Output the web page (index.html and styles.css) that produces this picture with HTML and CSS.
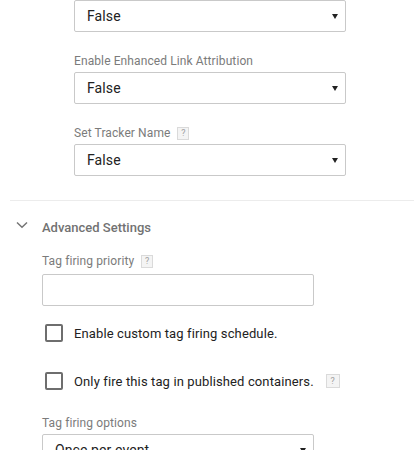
FILE: index.html
```html
<!DOCTYPE html>
<html>
<head>
<meta charset="utf-8">
<link rel="stylesheet" href="styles.css">
</head>
<body>
<div class="page">
  <section class="basic">
    <div class="field first">
      <div class="select"><span>False</span><i class="arrow"></i></div>
    </div>
    <div class="field">
      <div class="label">Enable Enhanced Link Attribution</div>
      <div class="select"><span>False</span><i class="arrow"></i></div>
    </div>
    <div class="field">
      <div class="label">Set Tracker Name <span class="help">?</span></div>
      <div class="select"><span>False</span><i class="arrow"></i></div>
    </div>
  </section>
  <div class="divider"></div>
  <section class="advanced">
    <div class="adv-header">
      <svg class="chev" width="12" height="8" viewBox="0 0 12 8"><path d="M1 1.5 L6 6.2 L11 1.5" fill="none" stroke="#757575" stroke-width="1.5"/></svg>
      <span>Advanced Settings</span>
    </div>
    <div class="adv-body">
      <div class="field f-priority">
        <div class="label">Tag firing priority <span class="help">?</span></div>
        <div class="input"></div>
      </div>
      <label class="check c1"><span class="box"></span><span class="ctext">Enable custom tag firing schedule.</span></label>
      <label class="check c2"><span class="box"></span><span class="ctext">Only fire this tag in published containers.</span><span class="help big">?</span></label>
      <div class="field f-options">
        <div class="label">Tag firing options</div>
        <div class="select"><span>Once per event</span><i class="arrow"></i></div>
      </div>
    </div>
  </section>
</div>
</body>
</html>
```
FILE: styles.css
```css
html, body {
  margin: 0;
  padding: 0;
  background: #fff;
}
body {
  font-family: Roboto, "Liberation Sans", Arial, sans-serif;
  color: #212121;
  overflow: hidden;
}
.page {
  width: 414px;
  height: 450px;
  overflow: hidden;
}
.basic {
  padding-left: 74px;
}
.field {
  margin-top: 21px;
}
.field.first {
  margin-top: 0;
}
.label {
  font-size: 12px;
  line-height: 16px;
  letter-spacing: 0.1px;
  color: #7b7b7b;
  margin-bottom: 3px;
  display: flex;
  align-items: center;
}
.help {
  display: inline-flex;
  align-items: center;
  justify-content: center;
  width: 10px;
  height: 11px;
  border: 1px solid #dadada;
  background: #f4f4f4;
  color: #a0a0a0;
  font-size: 9px;
  line-height: 11px;
  letter-spacing: 0;
  margin-left: 7px;
}
.help.big {
  width: 12px;
  height: 12px;
  margin-left: 12px;
}
.select {
  box-sizing: border-box;
  width: 272px;
  height: 32px;
  border: 1px solid #c9c9c9;
  border-radius: 2px;
  display: flex;
  align-items: center;
  justify-content: space-between;
  padding: 0 7px 0 12px;
  font-size: 14px;
  letter-spacing: 0.1px;
  color: #222;
}
.arrow {
  width: 0;
  height: 0;
  border-left: 3px solid transparent;
  border-right: 3px solid transparent;
  border-top: 5px solid #222;
  margin-top: 1px;
}
.divider {
  height: 1px;
  background: #ececec;
  margin: 24px 0 0 10px;
}
.adv-header {
  display: flex;
  align-items: center;
  height: 20px;
  margin-top: 16px;
  font-size: 13px;
  font-weight: 500;
  color: #727272;
}
.chev {
  margin-left: 16px;
  margin-right: 14px;
  margin-top: -4px;
}
.adv-body {
  padding-left: 42px;
}
.f-priority {
  margin-top: 16px;
}
.f-priority .label {
  margin-bottom: 5px;
}
.input {
  box-sizing: border-box;
  width: 272px;
  height: 32px;
  border: 1px solid #c9c9c9;
  border-radius: 2px;
}
.check {
  display: flex;
  align-items: center;
  font-size: 13px;
  letter-spacing: 0.12px;
  color: #222;
  height: 18px;
}
.check.c1 {
  margin-top: 18px;
}
.check.c2 {
  margin-top: 30px;
}
.box {
  box-sizing: border-box;
  width: 18px;
  height: 18px;
  border: 2px solid #6e6e6e;
  border-radius: 2px;
  margin-left: 3px;
  margin-right: 11px;
}
.f-options {
  margin-top: 25px;
}
```
